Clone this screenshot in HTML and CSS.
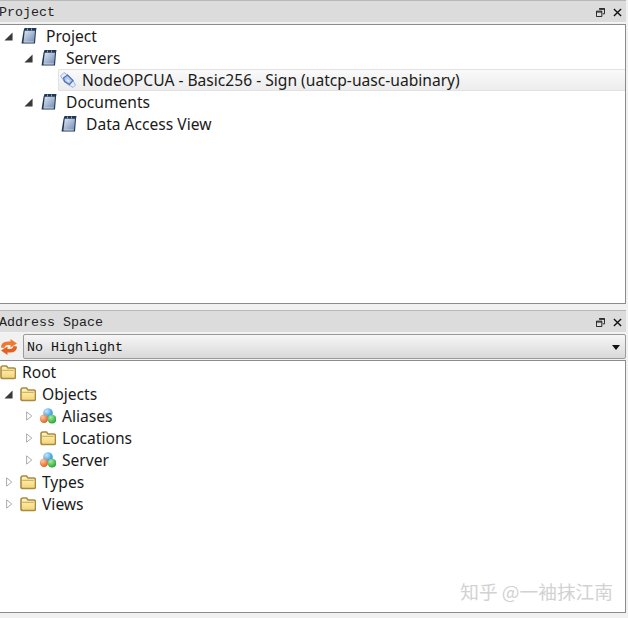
FILE: index.html
```html
<!DOCTYPE html>
<html lang="en">
<head>
<meta charset="utf-8">
<title>Project</title>
<link rel="stylesheet" href="styles.css">
</head>
<body>
<svg class="defs" width="0" height="0" aria-hidden="true">
  <defs>
    <linearGradient id="bookFill" x1="0" y1="0" x2="1" y2="1">
      <stop offset="0" stop-color="#dfe7f2"/><stop offset="1" stop-color="#6f8ab3"/>
    </linearGradient>
    <linearGradient id="folderFill" x1="0" y1="0" x2="0" y2="1">
      <stop offset="0" stop-color="#fff6c4"/><stop offset="1" stop-color="#f3d472"/>
    </linearGradient>
    <radialGradient id="ballBlue" cx=".35" cy=".3" r=".8"><stop offset="0" stop-color="#bfeaff"/><stop offset="1" stop-color="#1583d4"/></radialGradient>
    <radialGradient id="ballOrange" cx=".35" cy=".3" r=".8"><stop offset="0" stop-color="#ffc8a0"/><stop offset="1" stop-color="#de5518"/></radialGradient>
    <radialGradient id="ballGreen" cx=".35" cy=".3" r=".8"><stop offset="0" stop-color="#a8eca0"/><stop offset="1" stop-color="#159c25"/></radialGradient>
    <symbol id="book" viewBox="0 0 16 18">
      <path d="M3.500 1h12l-.5 3-1 12.500H.5L2.500 4z" fill="#1f3655"/>
      <path d="M3.800 3.800h10.200l-1 11.400H2.400z" fill="url(#bookFill)"/>
      <path d="M6.500 1.500v2M10.500 1.500v2" stroke="#8ea6c6" stroke-width="1"/>
      <path d="M2.700 15h10" stroke="#c9d5e6" stroke-width="1"/>
    </symbol>
    <symbol id="folder" viewBox="0 0 16 16">
      <path d="M1 4q0-2 2-2h3.500l1.500 2h5.500q2 0 2 2v7q0 1.500-1.500 1.500h-11Q1 14.500 1 13z" fill="url(#folderFill)" stroke="#a98a44" stroke-width="1.600"/>
      <path d="M2.200 6.300h11.600" stroke="#c9a752" stroke-width="1"/>
    </symbol>
    <symbol id="plug" viewBox="0 0 16 16">
      <path d="M.5 4 4 .5l5 3.500 3.500 4 3 5-2.500 2.500-5-3-4-3.500z" fill="#e3ecfa" stroke="#9ab2de" stroke-width="1"/>
      <path d="M3.500 6 7.500 3l5.500 5.500-3.500 4-5-3z" fill="#b4c9ee" stroke="#4f71b4" stroke-width="1.200"/>
      <path d="M7 7.500l2 2" stroke="#eef3fc" stroke-width="1.500"/>
    </symbol>
    <symbol id="balls" viewBox="0 0 16 16">
      <circle cx="8" cy="5" r="4.800" fill="url(#ballBlue)"/>
      <circle cx="4" cy="10.800" r="4.200" fill="url(#ballOrange)"/>
      <circle cx="12" cy="11.200" r="4.400" fill="url(#ballGreen)"/>
    </symbol>
    <symbol id="open" viewBox="0 0 10 10"><path d="M9.500 .5v9h-9z" fill="#3a3a3a"/></symbol>
    <symbol id="closed" viewBox="0 0 10 12"><path d="M2 .8l6.500 5.200L2 11.200z" fill="#fff" stroke="#a0a0a0" stroke-width="1.100"/></symbol>
  </defs>
</svg>

<section class="dock">
  <header class="title-bar">
    <span class="title">Project</span>
    <span class="actions">
      <svg class="act" viewBox="0 0 10 10"><path d="M3.500 .5h6v6h-2M.5 3.500h6v6h-6zM.5 4.500h6M3.500 1.500h6" fill="none" stroke="#111" stroke-width="1"/></svg>
      <svg class="act" viewBox="0 0 10 10"><path d="M1 1l8 8M9 1l-8 8" stroke="#111" stroke-width="1.500"/></svg>
    </span>
  </header>
  <div class="tree tree-top">
    <div class="row"><span class="tw"><svg class="tri"><use href="#open"/></svg></span><svg class="ic bk"><use href="#book"/></svg><span>Project</span></div>
    <div class="row in1"><span class="tw"><svg class="tri"><use href="#open"/></svg></span><svg class="ic bk"><use href="#book"/></svg><span>Servers</span></div>
    <div class="row sel"><div class="sel-box"><svg class="ic pl"><use href="#plug"/></svg><span>NodeOPCUA - Basic256 - Sign (uatcp-uasc-uabinary)</span></div></div>
    <div class="row in1"><span class="tw"><svg class="tri"><use href="#open"/></svg></span><svg class="ic bk"><use href="#book"/></svg><span>Documents</span></div>
    <div class="row in2"><span class="tw"></span><svg class="ic bk"><use href="#book"/></svg><span>Data Access View</span></div>
  </div>
</section>

<section class="dock dock-low">
  <header class="title-bar">
    <span class="title">Address Space</span>
    <span class="actions">
      <svg class="act" viewBox="0 0 10 10"><path d="M3.500 .5h6v6h-2M.5 3.500h6v6h-6zM.5 4.500h6M3.500 1.500h6" fill="none" stroke="#111" stroke-width="1"/></svg>
      <svg class="act" viewBox="0 0 10 10"><path d="M1 1l8 8M9 1l-8 8" stroke="#111" stroke-width="1.500"/></svg>
    </span>
  </header>
  <div class="tool-row">
    <svg class="refresh" viewBox="0 0 18 16">
      <path d="M1 8.500Q1 2.500 8 2.500h2.500V0L17 4.500 10.500 8.500V6H8Q5 6 4.500 9z" fill="#ee7a32"/>
      <path d="M17 7.500q0 6-7 6H7.500V16L1 11.500 7.500 7.500V10H10q3 0 3.500-3z" fill="#e5601f"/>
    </svg>
    <div class="combo"><span>No Highlight</span><i class="caret"></i></div>
  </div>
  <div class="tree tree-low">
    <div class="row"><svg class="ic fd root-ic"><use href="#folder"/></svg><span>Root</span></div>
    <div class="row"><span class="tw"><svg class="tri"><use href="#open"/></svg></span><svg class="ic fd"><use href="#folder"/></svg><span>Objects</span></div>
    <div class="row in1"><span class="tw"><svg class="tri tri-c"><use href="#closed"/></svg></span><svg class="ic fd"><use href="#balls"/></svg><span>Aliases</span></div>
    <div class="row in1"><span class="tw"><svg class="tri tri-c"><use href="#closed"/></svg></span><svg class="ic fd"><use href="#folder"/></svg><span>Locations</span></div>
    <div class="row in1"><span class="tw"><svg class="tri tri-c"><use href="#closed"/></svg></span><svg class="ic fd"><use href="#balls"/></svg><span>Server</span></div>
    <div class="row"><span class="tw"><svg class="tri tri-c"><use href="#closed"/></svg></span><svg class="ic fd"><use href="#folder"/></svg><span>Types</span></div>
    <div class="row"><span class="tw"><svg class="tri tri-c"><use href="#closed"/></svg></span><svg class="ic fd"><use href="#folder"/></svg><span>Views</span></div>
    <span class="watermark">知乎 @一袖抹江南</span>
  </div>
</section>
</body>
</html>
```
FILE: styles.css
```css
html, body { margin: 0; padding: 0; }
body {
  width: 628px;
  height: 618px;
  overflow: hidden;
  background: #f1f1f1;
  font-family: "Noto Sans", "Liberation Sans", sans-serif;
  font-size: 15.6px;
  color: #1a1a1a;
}
.defs { position: absolute; }
.dock { margin-right: 2px; margin-left: -1px; }
.dock-low { margin-top: 6px; }

.title-bar {
  height: 23px;
  padding-top: 2px;
  display: flex;
  align-items: center;
  justify-content: space-between;
  background: #dcdcdc;
  border-top: 1px solid #b8b8b8;
  box-sizing: border-box;
  border-bottom: 1px solid #f4f4f4;
}
.title {
  font-family: "Liberation Mono", monospace;
  font-size: 13.33px;
  color: #222;
}
.actions { display: flex; align-items: center; gap: 8px; padding-right: 4px; }
.act { width: 9px; height: 9px; display: block; }

.tree {
  background: #fff;
  border: 1px solid #8c8c8c;
  box-sizing: border-box;
}
.tree-top { height: 280px; margin-top: 1px; }
.tree-low { height: 253px; position: relative; }

.row { height: 22px; display: flex; align-items: center; white-space: nowrap; }
.in1 { padding-left: 20px; }
.in2 { padding-left: 40px; }
.tw { width: 20px; height: 22px; flex: none; display: flex; align-items: center; justify-content: center; padding-right: 3px; box-sizing: border-box; }
.tri { width: 9px; height: 9px; display: block; }
.tri-c { width: 8px; height: 12px; }
.ic { flex: none; display: block; width: 16px; height: 16px; }
.bk { height: 18px; margin-left: 1px; margin-right: 9px; }
.fd { margin-right: 6px; }
.pl { margin-right: 6px; }

.sel { padding-left: 58px; }
.sel-box {
  flex: 1;
  height: 22px;
  box-sizing: border-box;
  display: flex;
  align-items: center;
  padding-left: 1px;
  background: linear-gradient(#fafafa, #ececec);
  border: 1px solid #e2e2e2;
  border-right: 0;
  border-radius: 2px 0 0 2px;
}

.tool-row { height: 27px; display: flex; align-items: center; }
.refresh { width: 18px; height: 16px; flex: none; margin-left: 1px; margin-right: 5px; display: block; }
.combo {
  flex: 1;
  height: 25px;
  box-sizing: border-box;
  display: flex;
  align-items: center;
  justify-content: space-between;
  padding: 2px 5px 0 3px;
  background: linear-gradient(#f6f6f6, #d9d9d9);
  border: 1px solid #9a9a9a;
  border-radius: 2px;
  font-family: "Liberation Mono", monospace;
  font-size: 13.33px;
  color: #111;
}
.caret {
  width: 0;
  height: 0;
  border-left: 4px solid transparent;
  border-right: 4px solid transparent;
  border-top: 5px solid #111;
}

.watermark {
  position: absolute;
  right: 12px;
  bottom: 8px;
  font-family: "Noto Sans CJK SC", sans-serif;
  font-size: 18.7px;
  color: #d2d2d2;
  white-space: nowrap;
}
```
